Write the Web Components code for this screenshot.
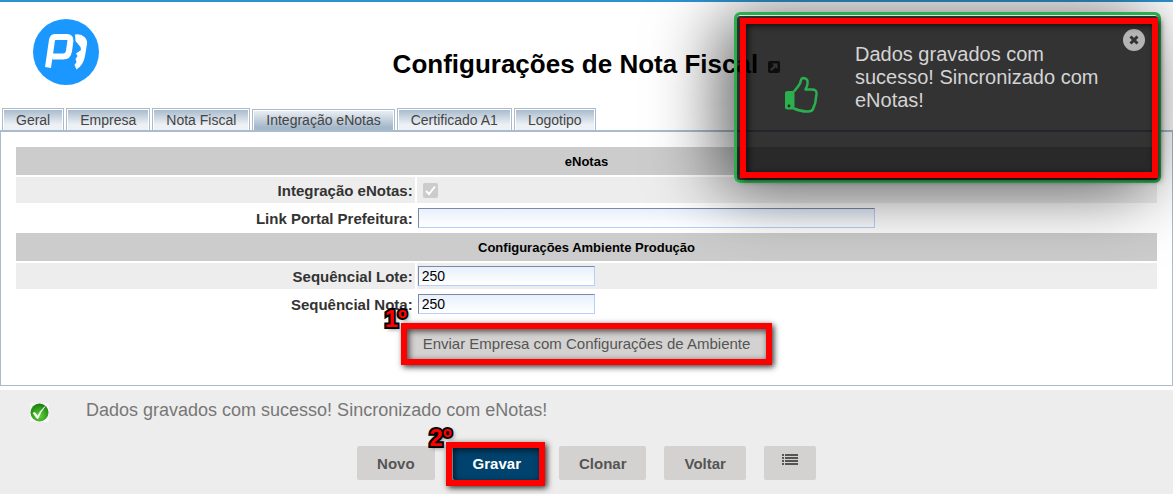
<!DOCTYPE html>
<html lang="pt-BR">
<head>
<meta charset="utf-8">
<title>Configurações de Nota Fiscal</title>
<style>
    body {
        margin: 0;
        background: #fff;
        font-family: "Liberation Sans", Arial, sans-serif;
        font-size: 14px;
        color: #333;
    }
</style>
</head>
<body>
<nota-page>
    <page-header slot="header">Configurações de Nota Fiscal</page-header>
    <tab-bar>
        <tab-item>Geral</tab-item>
        <tab-item>Empresa</tab-item>
        <tab-item>Nota Fiscal</tab-item>
        <tab-item active>Integração eNotas</tab-item>
        <tab-item>Certificado A1</tab-item>
        <tab-item>Logotipo</tab-item>
    </tab-bar>
    <enotas-form></enotas-form>
    <action-footer slot="footer">Dados gravados com sucesso! Sincronizado com eNotas!</action-footer>
    <toast-message slot="toast">Dados gravados com sucesso! Sincronizado com eNotas!</toast-message>
</nota-page>

<script>
class BaseElement extends HTMLElement {
    constructor() {
        super();
        this.attachShadow({ mode: "open" });
    }

    connectedCallback() {
        this.shadowRoot.innerHTML = this.template();
    }
}

class NotaPage extends BaseElement {
    template() {
        return `
            <style>
                :host {
                    display: block;
                    position: relative;
                    border-top: 2px solid #2e92cf;
                }
            </style>

            <slot name="header"></slot>
            <main><slot></slot></main>
            <slot name="footer"></slot>
            <slot name="toast"></slot>
        `;
    }
}

class PageHeader extends BaseElement {
    template() {
        return `
            <style>
                :host {
                    display: grid;
                    grid-template-columns: 1fr auto 1fr;
                    padding: 17px 33px 23px;
                }
                .logo { display: block; }
                h1 {
                    margin: 28px 0 0;
                    font-size: 26px;
                    line-height: 34px;
                    color: #000;
                }
                a { margin-left: 2px; }
            </style>

            <svg class="logo" width="66" height="66" viewBox="0 0 66 66">
                <circle cx="33" cy="33" r="33" fill="#1a98ff"/>
                <path d="M15 48.500L19 21Q19.600 18 22.500 18H34Q37.800 18 37.400 22L36 32Q35.200 37.500 30 37.500H19.500" fill="none" stroke="#fff" stroke-width="6" stroke-linejoin="round"/>
                <path d="M42 15.500Q48 14.500 51.500 18Q54.500 21 54 25L52 37Q50.500 46 43.500 50.500L41.500 46L43.500 43L42.500 40L44.500 37L43 34.500L48 31L47.500 28L42.500 22Z" fill="#fff"/>
            </svg>
            <h1>
                <slot></slot>
                <a href="#" aria-label="Abrir em nova janela"><svg width="13" height="13" viewBox="0 0 13 13">
                    <rect x="1" y="1" width="12" height="12" rx="2" fill="#444"/>
                    <path d="M5 3.500H10.500V9L8.600 7.200L4.500 11L3 9.500L7 5.500Z" fill="#fff"/>
                </svg></a>
            </h1>
        `;
    }
}

class TabBar extends BaseElement {
    template() {
        return `
            <style>
                :host {
                    display: flex;
                    align-items: flex-end;
                    gap: 2px;
                    padding-left: 2px;
                    border-bottom: 2px solid #a9bbcd;
                }
            </style>

            <slot></slot>
        `;
    }
}

class TabItem extends BaseElement {
    template() {
        return `
            <style>
                :host { display: block; }
                a {
                    display: block;
                    padding: 2px 13px 0;
                    border: 1px solid #a9bbcd;
                    border-bottom: 0;
                    box-shadow: inset 1px 1px #fff, inset -1px 0 #fff;
                    background: linear-gradient(#a5b8ca, #edf1f5 75%);
                    line-height: 19px;
                    color: #444;
                    text-decoration: none;
                }
                :host([active]) a {
                    padding-top: 1px;
                    background: linear-gradient(#edf1f5, #a5b8ca 85%);
                }
            </style>

            <a href="#"><slot></slot></a>
        `;
    }
}

// red frame with an optional step number, drawn over whatever is slotted
class StepMark extends BaseElement {
    template() {
        const step = this.getAttribute("step");

        return `
            <style>
                :host {
                    display: inline-block;
                    position: relative;
                }
                .frame {
                    position: absolute;
                    inset: var(--mark-inset, -4px);
                    border: 6px solid #f00;
                    box-shadow: 2px 2px 6px rgba(0, 0, 0, .8), inset 2px 2px 6px rgba(0, 0, 0, .7);
                    pointer-events: none;
                }
                .step {
                    position: absolute;
                    left: -22px;
                    top: -22px;
                    font-size: 24px;
                    font-weight: bold;
                    line-height: 24px;
                    color: #f00;
                    -webkit-text-stroke: 4px #000;
                    paint-order: stroke fill;
                    text-shadow: 2px 2px 4px rgba(0, 0, 0, .6);
                }
            </style>

            <slot></slot>
            <div class="frame">${step ? `<span class="step">${step}</span>` : ""}</div>
        `;
    }
}

class EnotasForm extends BaseElement {
    template() {
        return `
            <style>
                :host {
                    display: block;
                    padding: 13px 13px 22px;
                    border: 1px solid #a9bbcd;
                    border-top: 0;
                }
                table {
                    width: 100%;
                    border-spacing: 2px;
                    table-layout: fixed;
                }
                table + table { margin-top: -2px; }
                col.label { width: 35%; }
                th, td { padding: 0; }
                thead th {
                    height: 28px;
                    background: #ccc;
                    font-size: 13px;
                    color: #000;
                }
                tbody th {
                    height: 26px;
                    padding-right: 2px;
                    font-size: 15px;
                    text-align: right;
                }
                td { padding-left: 1px; }
                .shade > * { background: #ededed; }
                input {
                    display: block;
                    box-sizing: border-box;
                    height: 20px;
                    padding: 0 3px;
                    border: 1px solid;
                    border-color: #7b8ba5 #b5cfff #b5cfff #7b8ba5;
                    background: linear-gradient(#e8f0fc, #fff) padding-box;
                    font: 14px "Liberation Sans", Arial, sans-serif;
                    color: #000;
                }
                input[type="checkbox"] {
                    appearance: none;
                    width: 15px;
                    height: 15px;
                    margin: 0 0 0 5px;
                    border: 0;
                    border-radius: 2px;
                    background: #ccc url('data:image/svg+xml,<svg xmlns="http://www.w3.org/2000/svg" viewBox="0 0 15 15"><path d="M3 8L6 11L12 3.500" fill="none" stroke="white" stroke-width="2"/></svg>');
                }
                .link { width: 457px; }
                .number { width: 177px; }
                .send {
                    padding: 8px 0 0;
                    text-align: center;
                }
                .send button {
                    display: block;
                    padding: 0 18px;
                    border: 0;
                    border-radius: 2px;
                    background: #d4d2d0;
                    font: 15px/34px "Liberation Sans", Arial, sans-serif;
                    color: #555;
                }
            </style>

            <table>
                <colgroup><col class="label"><col></colgroup>
                <thead>
                    <tr><th colspan="2">eNotas</th></tr>
                </thead>
                <tbody>
                    <tr class="shade">
                        <th><label for="integracao">Integração eNotas:</label></th>
                        <td><input id="integracao" type="checkbox" checked disabled></td>
                    </tr>
                    <tr>
                        <th><label for="link">Link Portal Prefeitura:</label></th>
                        <td><input id="link" class="link" type="text"></td>
                    </tr>
                </tbody>
            </table>
            <table>
                <colgroup><col class="label"><col></colgroup>
                <thead>
                    <tr><th colspan="2">Configurações Ambiente Produção</th></tr>
                </thead>
                <tbody>
                    <tr class="shade">
                        <th><label for="lote">Sequêncial Lote:</label></th>
                        <td><input id="lote" class="number" type="text" value="250"></td>
                    </tr>
                    <tr>
                        <th><label for="nota">Sequêncial Nota:</label></th>
                        <td><input id="nota" class="number" type="text" value="250"></td>
                    </tr>
                    <tr>
                        <td class="send" colspan="2">
                            <step-mark step="1º"><button type="button">Enviar Empresa com Configurações de Ambiente</button></step-mark>
                        </td>
                    </tr>
                </tbody>
            </table>
        `;
    }
}

class ActionFooter extends BaseElement {
    template() {
        return `
            <style>
                :host {
                    display: block;
                    margin: 4px 0 3px;
                    padding: 8px 0 14px;
                    background: #ededed;
                }
                .status {
                    display: flex;
                    align-items: flex-end;
                    gap: 37px;
                    padding-left: 30px;
                    font-size: 18px;
                    line-height: 24px;
                    color: #777;
                }
                .buttons {
                    display: flex;
                    justify-content: center;
                    gap: 18px;
                    padding-top: 24px;
                }
                button {
                    height: 34px;
                    padding: 0 20px;
                    border: 0;
                    border-radius: 2px;
                    background: #d4d2d0;
                    font: bold 15px "Liberation Sans", Arial, sans-serif;
                    color: #555;
                }
                step-mark { --mark-inset: -4px -4px -6px -7px; }
                .primary {
                    display: block;
                    background: #00436f;
                    color: #fff;
                }
                .list { padding: 0 18px; }
            </style>

            <div class="status">
                <svg width="19" height="19" viewBox="0 0 19 19">
                    <defs>
                        <radialGradient id="ball" cx=".5" cy=".7" r=".7">
                            <stop offset="0" stop-color="#5fd435"/>
                            <stop offset="1" stop-color="#177a12"/>
                        </radialGradient>
                    </defs>
                    <rect width="19" height="19" fill="#f5f5f5"/>
                    <circle cx="9.500" cy="9.500" r="9" fill="url(#ball)"/>
                    <path d="M3 10L5 9.500L7.500 13Q10 8 15 3.500Q10.500 9 8 15.500H7Z" fill="#fff" stroke="#fff" stroke-width=".6"/>
                </svg>
                <span><slot></slot></span>
            </div>
            <div class="buttons">
                <button type="button">Novo</button>
                <step-mark step="2º"><button class="primary" type="button">Gravar</button></step-mark>
                <button type="button">Clonar</button>
                <button type="button">Voltar</button>
                <button class="list" type="button" aria-label="Listar">
                    <svg width="16" height="16" viewBox="0 0 16 16" fill="#555">
                        <path d="M0 0H2V2H0ZM3 0H16V2H3ZM0 3H2V5H0ZM3 3H16V5H3ZM0 6H2V8H0ZM3 6H16V8H3ZM0 9H2V11H0ZM3 9H16V11H3Z"/>
                    </svg>
                </button>
            </div>
        `;
    }
}

class ToastMessage extends BaseElement {
    template() {
        return `
            <style>
                :host {
                    position: absolute;
                    top: 10px;
                    right: 12px;
                    box-sizing: border-box;
                    width: 427px;
                    border: 3px solid #2bb04f;
                    border-radius: 6px;
                    background: rgba(0, 0, 0, .8);
                    box-shadow: -12px 6px 70px rgba(0, 0, 0, .65), inset 0 1px #eee;
                }
                step-mark {
                    display: block;
                    --mark-inset: 3px 0 2px 3px;
                }
                .body {
                    display: flex;
                    gap: 35px;
                    min-height: 137px;
                    padding: 28px 50px 0 48px;
                }
                .thumb {
                    flex: none;
                    margin-top: 33px;
                }
                p {
                    margin: 0;
                    font-size: 20px;
                    line-height: 23px;
                    color: #d4d4d4;
                }
                button {
                    position: absolute;
                    top: 14px;
                    right: 13px;
                    width: 22px;
                    height: 22px;
                    padding: 0;
                    border: 0;
                    background: none;
                }
                button svg { display: block; }
            </style>

            <step-mark>
                <div class="body">
                    <svg class="thumb" width="35" height="38" viewBox="0 0 35 38">
                        <path d="M9 15.500L13 10.500Q15.500 8 16 4Q16.500 2 18.500 2Q23.500 2.500 22.500 8Q22 11 20.500 13.500H27Q32 13.500 31.500 18L30.500 25Q30.500 27 29.500 29L28 33Q27 35.500 23 35.500Q17 36 9 32.500" fill="none" stroke="#2bb04f" stroke-width="2.500" stroke-linejoin="round"/>
                        <path d="M2.500 15H9.500V33.500H2.500Q0 33.500 0 31.500V17Q0 15 2.500 15Z" fill="#2bb04f"/>
                        <circle cx="4" cy="30" r="1.400" fill="#222"/>
                    </svg>
                    <p><slot></slot></p>
                </div>
                <button type="button" aria-label="Fechar">
                    <svg width="22" height="22" viewBox="0 0 22 22">
                        <circle cx="11" cy="11" r="11" fill="#b4b4b4"/>
                        <path d="M7.500 7.500L14.500 14.500M14.500 7.500L7.500 14.500" stroke="#333" stroke-width="3"/>
                    </svg>
                </button>
            </step-mark>
        `;
    }
}

customElements.define("nota-page", NotaPage);
customElements.define("page-header", PageHeader);
customElements.define("tab-bar", TabBar);
customElements.define("tab-item", TabItem);
customElements.define("step-mark", StepMark);
customElements.define("enotas-form", EnotasForm);
customElements.define("action-footer", ActionFooter);
customElements.define("toast-message", ToastMessage);
</script>
</body>
</html>
